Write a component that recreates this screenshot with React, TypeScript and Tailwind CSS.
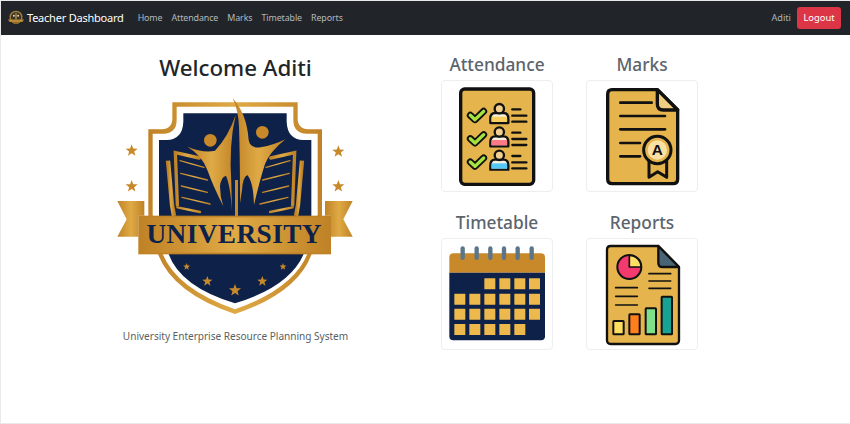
import React from "react";

const GOLD = "#c8892b";
const NAVY = "#0e2148";
const INK = "#111111";
const PAPER = "#e5b44c";

function starPoints(cx: number, cy: number, r: number) {
  const pts: string[] = [];
  for (let i = 0; i < 10; i++) {
    const rad = i % 2 === 0 ? r : r * 0.42;
    const a = -Math.PI / 2 + (i * Math.PI) / 5;
    pts.push(`${(cx + rad * Math.cos(a)).toFixed(1)},${(cy + rad * Math.sin(a)).toFixed(1)}`);
  }
  return pts.join(" ");
}

function BookSide() {
  return (
    <g fill="none" stroke="url(#gold)" strokeLinecap="round">
      <path d="M232 345 L226 188 L298 204" strokeWidth="10" />
      <path d="M204 212 L216 345 L222 378" strokeWidth="13" strokeLinecap="butt" />
      <path d="M240 212 L312 232" strokeWidth="4" />
      <path d="M242 250 L322 270" strokeWidth="4" />
      <path d="M244 288 L322 307" strokeWidth="4" />
      <path d="M246 322 L330 342" strokeWidth="4" />
      <path d="M232 352 L300 366" strokeWidth="7" />
    </g>
  );
}

function Crest() {
  const stars: [number, number, number][] = [
    [95, 182, 19], [95, 289, 19], [715, 185, 19], [715, 289, 19],
    [260, 530, 11], [322, 574, 16], [405, 601, 19], [487, 574, 16], [549, 530, 11],
  ];
  return (
    <svg viewBox="0 0 810 720" className="w-[270px] h-[240px] block">
      <defs>
        <linearGradient id="gold" x1="0" y1="0" x2="1" y2="0">
          <stop offset="0" stopColor="#c08226" />
          <stop offset="0.5" stopColor="#dfaa45" />
          <stop offset="1" stopColor="#c08226" />
        </linearGradient>
      </defs>
      <path d="M217 37 H593 V85 Q593 117 625 118 H666 V375 L634 495 Q590 610 405 672 Q220 610 175 495 L145 375 V118 H185 Q217 117 217 85 Z" fill="url(#gold)" />
      <path d="M230 50 H580 V90 Q580 130 620 131 H653 V375 L622 492 Q580 596 405 658 Q230 596 188 492 L158 375 V131 H190 Q230 130 230 90 Z" fill="#ffffff" />
      <path d="M250 70 H560 V95 Q562 148 610 150 H634 V380 L612 490 Q570 590 405 640 Q240 590 205 490 L177 380 V150 H200 Q248 148 250 95 Z" fill={NAVY} />
      <BookSide />
      <g transform="translate(810 0) scale(-1 1)"><BookSide /></g>
      <circle cx="331" cy="151" r="19" fill={GOLD} />
      <circle cx="487" cy="127" r="19" fill={GOLD} />
      <path d="M262 170 Q310 190 345 182 Q385 140 407 75 Q386 165 394 280 L396 366 Q392 290 378 257 Q362 262 360 290 Q360 320 370 349 Q340 290 322 240 Q305 195 262 170 Z" fill="url(#gold)" />
      <path d="M398 25 Q440 70 446 150 Q450 176 482 172 Q522 165 556 148 Q510 185 495 222 Q478 275 462 345 Q460 275 442 255 Q428 262 426 300 L420 340 Q420 200 417 110 Q415 60 398 25 Z" fill="url(#gold)" />
      <rect x="405" y="270" width="9" height="110" fill={GOLD} />
      <path d="M52 333 H133 V377 H115 V440 H52 L80 388 Z" fill="url(#gold)" />
      <path d="M758 333 H675 V377 H693 V440 H758 L730 388 Z" fill="url(#gold)" />
      <rect x="115" y="377" width="578" height="116" fill="#c08226" />
      <rect x="120" y="382" width="568" height="106" fill="url(#gold)" />
      <text x="402" y="460" textAnchor="middle" textLength="525" lengthAdjust="spacing" fontSize="82" fontWeight="700" fill={NAVY} fontFamily="'Liberation Serif', serif">UNIVERSITY</text>
      {stars.map(([x, y, r]) => (
        <polygon key={`${x}-${y}`} points={starPoints(x, y, r)} fill={GOLD} />
      ))}
    </svg>
  );
}

function MiniCrest() {
  return (
    <svg viewBox="0 0 20 18" className="w-[18px] h-[17px] shrink-0">
      <circle cx="10" cy="7.5" r="6.5" fill="#3b3325" stroke="#a9843f" strokeWidth="1.4" />
      <circle cx="7.6" cy="6" r="1.1" fill="#f0d9a0" />
      <circle cx="12.4" cy="6" r="1.1" fill="#f0d9a0" />
      <path d="M10 3 V10" stroke="#e8c77f" strokeWidth="1" />
      <path d="M1 10 H19 L17 13 H3 Z" fill="#b98a35" />
      <path d="M5 13 Q10 18 15 13 Z" fill="#8d6a2a" />
    </svg>
  );
}

function Person({ y, color }: { y: number; color: string }) {
  return (
    <g stroke={INK} strokeWidth="7" strokeLinejoin="round">
      <path d={`M146 ${y + 43} V${y + 30} Q146 ${y + 13} 160 ${y + 13} H186 Q200 ${y + 13} 200 ${y + 30} V${y + 43} Z`} fill="#f4f0e0" />
      <path d={`M150 ${y + 40} V${y + 24} H196 V${y + 40} Z`} fill={color} stroke="none" />
      <circle cx="173" cy={y} r="14" fill="#f0cf8f" />
    </g>
  );
}

function AttendanceIcon() {
  const rows: [number, string][] = [[84, "#f9cf5e"], [154, "#fb7a85"], [224, "#56c8f5"]];
  return (
    <svg viewBox="1 1 330 330" className="w-[110px] h-[110px] block">
      <rect x="57" y="25" width="219" height="286" rx="12" fill={PAPER} stroke={INK} strokeWidth="10" />
      {rows.map(([y, c]) => (
        <g key={y}>
          <path d={`M86 ${y + 20} L100 ${y + 33} L126 ${y + 8}`} fill="none" stroke={INK} strokeWidth="21" strokeLinecap="round" strokeLinejoin="round" />
          <path d={`M86 ${y + 20} L100 ${y + 33} L126 ${y + 8}`} fill="none" stroke="#a6e33f" strokeWidth="10" strokeLinecap="round" strokeLinejoin="round" />
          <Person y={y} color={c} />
          <g stroke={INK} strokeWidth="7" strokeLinecap="round">
            <path d={`M212 ${y + 2} H236`} />
            <path d={`M212 ${y + 21} H254`} />
            <path d={`M212 ${y + 39} H254`} />
          </g>
        </g>
      ))}
    </svg>
  );
}

function MarksIcon() {
  return (
    <svg viewBox="1 1 330 330" className="w-[110px] h-[110px] block">
      <path d="M76 27 H212 L273 88 V295 Q273 309 259 309 H77 Q63 309 63 295 V41 Q63 27 76 27 Z" fill={PAPER} stroke={INK} strokeWidth="10" strokeLinejoin="round" />
      <path d="M212 27 V70 Q212 88 230 88 H273 Z" fill="#efce82" stroke={INK} strokeWidth="10" strokeLinejoin="round" />
      <g stroke={INK} strokeWidth="8" strokeLinecap="round">
        <path d="M101 66 H195" />
        <path d="M101 106 H235" />
        <path d="M101 146 H235" />
        <path d="M101 187 H160" />
        <path d="M101 227 H160" />
      </g>
      <path d="M187 240 V290 L213 273 L240 290 V240 Z" fill={PAPER} stroke={INK} strokeWidth="9" strokeLinejoin="round" />
      <circle cx="212" cy="208" r="41" fill={PAPER} stroke={INK} strokeWidth="9" />
      <circle cx="212" cy="208" r="29" fill="#fbe0a4" />
      <text x="212" y="224" textAnchor="middle" fontSize="46" fontWeight="700" fill={INK} fontFamily="'Liberation Sans', sans-serif">A</text>
    </svg>
  );
}

function TimetableIcon() {
  const xs = [38, 83, 128, 173, 218, 262];
  const rows: [number, number[]][] = [
    [119, [2, 3, 4, 5]],
    [165, [0, 1, 2, 3, 4, 5]],
    [210, [0, 1, 2, 3, 4, 5]],
    [256, [0, 1, 2, 3, 4]],
  ];
  return (
    <svg viewBox="1 1 330 330" className="w-[110px] h-[110px] block">
      <path d="M23 56 Q23 44 35 44 H298 Q310 44 310 56 V102 H23 Z" fill={GOLD} />
      <path d="M23 102 H310 V293 Q310 305 298 305 H35 Q23 305 23 293 Z" fill={NAVY} />
      {[63, 105, 146, 187, 228, 270].map((x) => (
        <rect key={x} x={x - 6.5} y="23" width="13" height="41" rx="6.5" fill="#5b7688" />
      ))}
      {rows.map(([y, cols]) =>
        cols.map((c) => <rect key={`${y}-${c}`} x={xs[c]} y={y} width="33" height="33" rx="1" fill="#edb94c" />)
      )}
    </svg>
  );
}

function ReportsIcon() {
  const bars: [number, number, number, string][] = [
    [80, 247, 40, "#ffdf5e"], [128, 227, 60, "#ff7f1e"], [177, 209, 78, "#7fe08c"], [225, 174, 113, "#16a394"],
  ];
  return (
    <svg viewBox="1 1 330 330" className="w-[110px] h-[110px] block">
      <path d="M72 22 H215 L277 85 V305 Q277 316 266 316 H72 Q61 316 61 305 V33 Q61 22 72 22 Z" fill={PAPER} stroke={INK} strokeWidth="7" strokeLinejoin="round" />
      <path d="M215 22 V72 Q215 85 228 85 H277 Z" fill="#4a6475" stroke={INK} strokeWidth="7" strokeLinejoin="round" />
      <circle cx="128" cy="85" r="36" fill="#f23a6f" stroke={INK} strokeWidth="6" />
      <path d="M128 85 V50 A35 35 0 0 1 163 85 Z" fill="#ffe066" stroke={INK} strokeWidth="5" strokeLinejoin="round" />
      <g stroke={INK} strokeWidth="5" strokeLinecap="round">
        <path d="M187 105 H252" />
        <path d="M187 127 H252" />
        <path d="M187 149 H252" />
        <path d="M87 147 H152" />
        <path d="M87 173 H152" />
        <path d="M87 199 H152" />
      </g>
      {bars.map(([x, y, h, c]) => (
        <rect key={x} x={x} y={y} width="31" height={h} rx="2" fill={c} stroke={INK} strokeWidth="6" />
      ))}
    </svg>
  );
}

function Tile({ title, children }: { title: string; children: React.ReactNode }) {
  return (
    <div className="flex flex-col items-center">
      <h2 className="text-[17.3px] leading-[26px] font-medium text-[#5b646d] mb-[2px]">{title}</h2>
      <div className="w-[112px] h-[112px] border border-[#eceef0] rounded-[4px] bg-white">{children}</div>
    </div>
  );
}

export default function App() {
  const links = ["Home", "Attendance", "Marks", "Timetable", "Reports"];
  return (
    <div className="h-[424px] w-[850px] overflow-hidden bg-white border border-[#e9e9e9] border-r-0 [font-family:'Noto_Sans',sans-serif]">
      <nav className="h-[34px] bg-[#212529] flex items-center pl-[6px] pr-[8px]">
        <MiniCrest />
        <span className="ml-[2px] text-white text-[11px] tracking-[-0.22px]">Teacher Dashboard</span>
        <div className="ml-[14px] flex gap-[9px] text-[8.9px] tracking-[-0.1px] text-[#b4b8bc]">
          {links.map((l) => <span key={l}>{l}</span>)}
        </div>
        <span className="ml-auto text-[9.2px] text-[#aeb3b8]">Aditi</span>
        <button className="ml-[6px] mr-[1px] w-[44px] h-[22px] rounded-[3px] bg-[#dc3545] text-white text-[9.4px]">Logout</button>
      </nav>
      <main className="flex">
        <section className="w-[469px] flex flex-col items-center">
          <h1 className="mt-[15px] text-[22.3px] leading-[36px] font-medium text-[#212529]">Welcome Aditi</h1>
          <div className="mt-[4px] ml-[-2px]"><Crest /></div>
          <p className="mt-[-2px] text-[10.1px] leading-[16px] tracking-[-0.03px] text-[#5a5f64]">University Enterprise Resource Planning System</p>
        </section>
        <section className="ml-[-30px] mt-[17px] pl-[1px] grid grid-cols-[112px_112px] gap-x-[33px] gap-y-[18px] content-start">
          <Tile title="Attendance"><AttendanceIcon /></Tile>
          <Tile title="Marks"><MarksIcon /></Tile>
          <Tile title="Timetable"><TimetableIcon /></Tile>
          <Tile title="Reports"><ReportsIcon /></Tile>
        </section>
      </main>
    </div>
  );
}
